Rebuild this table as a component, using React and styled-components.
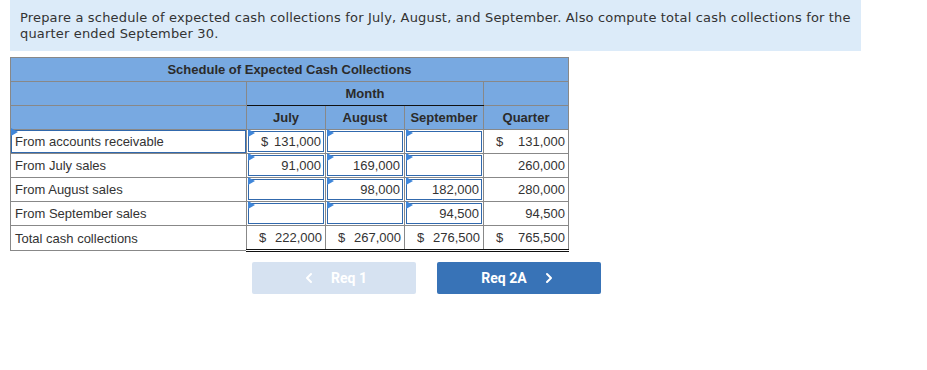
import React from "react";
import styled, { createGlobalStyle } from "styled-components";
import { ChevronLeft, ChevronRight } from "lucide-react";

const GlobalStyle = createGlobalStyle`
  body {
    margin: 0;
    background: #fff;
    font-family: "Liberation Sans", Arial, sans-serif;
  }
`;

const rows = [
  { label: "From accounts receivable", focused: true, cells: [{ v: "131,000", d: true }, null, null], q: { v: "131,000", d: true } },
  { label: "From July sales", cells: [{ v: "91,000" }, { v: "169,000" }, null], q: { v: "260,000" } },
  { label: "From August sales", cells: [null, { v: "98,000" }, { v: "182,000" }], q: { v: "280,000" } },
  { label: "From September sales", cells: [null, null, { v: "94,500" }], q: { v: "94,500" } },
];

const totals = ["222,000", "267,000", "276,500", "765,500"];

export default function App() {
  return (
    <Page>
      <GlobalStyle />
      <Prompt>
        Prepare a schedule of expected cash collections for July, August, and September. Also compute total cash collections for the quarter ended September 30.
      </Prompt>

      <Schedule>
        <colgroup>
          <col style={{ width: 236 }} />
          <col style={{ width: 79 }} />
          <col style={{ width: 79 }} />
          <col style={{ width: 79 }} />
          <col style={{ width: 85 }} />
        </colgroup>
        <thead>
          <tr>
            <HeadCell colSpan={5}>Schedule of Expected Cash Collections</HeadCell>
          </tr>
          <tr>
            <HeadCell />
            <HeadCell colSpan={3} $underline>Month</HeadCell>
            <HeadCell />
          </tr>
          <tr>
            <HeadCell />
            <HeadCell>July</HeadCell>
            <HeadCell>August</HeadCell>
            <HeadCell>September</HeadCell>
            <HeadCell>Quarter</HeadCell>
          </tr>
        </thead>
        <tbody>
          {rows.map((r) => (
            <tr key={r.label}>
              <LabelCell>
                {r.focused ? (
                  <InputBox $left>
                    <Marker />
                    {r.label}
                  </InputBox>
                ) : (
                  <LabelText>{r.label}</LabelText>
                )}
              </LabelCell>
              {r.cells.map((c, i) => (
                <EntryCell key={i}>
                  <InputBox>
                    <Marker />
                    {c && (
                      <>
                        <span>{c.d ? "$" : ""}</span>
                        <span>{c.v}</span>
                      </>
                    )}
                  </InputBox>
                </EntryCell>
              ))}
              <PlainCell>
                <Amount>
                  <span>{r.q.d ? "$" : ""}</span>
                  <span>{r.q.v}</span>
                </Amount>
              </PlainCell>
            </tr>
          ))}
          <tr>
            <LabelCell>
              <LabelText>Total cash collections</LabelText>
            </LabelCell>
            {totals.map((t) => (
              <PlainCell key={t} $total>
                <Amount>
                  <span>$</span>
                  <span>{t}</span>
                </Amount>
              </PlainCell>
            ))}
          </tr>
        </tbody>
      </Schedule>

      <Nav>
        <NavButton disabled>
          <ChevronLeft size={16} strokeWidth={3} />
          Req 1
        </NavButton>
        <NavButton>
          Req 2A
          <ChevronRight size={16} strokeWidth={3} />
        </NavButton>
      </Nav>
    </Page>
  );
}

const Page = styled.div`
  padding: 0 10px;
  width: 907px;
`;

const Prompt = styled.div`
  width: 851px;
  box-sizing: border-box;
  background: #dcebf9;
  padding: 10px 4px 9px 10px;
  font-family: "DejaVu Sans", Verdana, sans-serif;
  font-size: 13px;
  letter-spacing: 0.17px;
  line-height: 16px;
  color: #333;
`;

const Schedule = styled.table`
  margin-top: 6px;
  width: 558px;
  border-collapse: collapse;
  table-layout: fixed;
  font-size: 13px;
  color: #333;
`;

const HeadCell = styled.th`
  background: #78a9e1;
  border: 1px solid #888;
  border-bottom: 1px solid ${(p) => (p.$underline ? "#111" : "#888")};
  height: 23px;
  padding: 0;
  font-weight: bold;
  font-size: 13px;
  color: #2b2b2b;
  text-align: center;
  vertical-align: middle;
`;

const LabelCell = styled.td`
  border: 1px solid #888;
  height: 23px;
  padding: 0;
  vertical-align: middle;
`;

const LabelText = styled.div`
  padding: 0 4px;
  line-height: 23px;
`;

const EntryCell = styled.td`
  border: 1px solid #888;
  height: 23px;
  padding: 1px;
  box-sizing: border-box;
  vertical-align: middle;
`;

const InputBox = styled.div`
  position: relative;
  box-sizing: border-box;
  height: 21px;
  border: 1px solid #3169ad;
  display: flex;
  justify-content: ${(p) => (p.$left ? "flex-start" : "space-between")};
  align-items: center;
  padding: 0 2px 0 12px;
  white-space: nowrap;
  ${(p) => p.$left && "padding-left: 3px; height: 23px; margin: 0;"}
`;

const Marker = styled.span`
  position: absolute;
  left: 0;
  top: 0;
  width: 0;
  height: 0;
  border-top: 4px solid transparent;
  border-bottom: 4px solid transparent;
  border-left: 7px solid #3f86d9;
  transform: translate(-1px, -3px);
`;

const PlainCell = styled.td`
  border: 1px solid #888;
  border-bottom: ${(p) => (p.$total ? "3px double #111" : "1px solid #888")};
  height: 23px;
  padding: 0 3px 0 12px;
  vertical-align: middle;
`;

const Amount = styled.div`
  display: flex;
  justify-content: space-between;
  white-space: nowrap;
`;

const Nav = styled.div`
  display: flex;
  gap: 21px;
  margin-top: 10px;
  padding-left: 242px;
`;

const NavButton = styled.button`
  width: 164px;
  height: 32px;
  border: none;
  border-radius: 2px;
  background: ${(p) => (p.disabled ? "#d6e2f1" : "#3873b7")};
  color: #fff;
  font-family: Roboto, "Liberation Sans", sans-serif;
  font-weight: bold;
  font-size: 14px;
  display: flex;
  align-items: center;
  justify-content: center;
  gap: 14px;
  cursor: ${(p) => (p.disabled ? "default" : "pointer")};
`;
